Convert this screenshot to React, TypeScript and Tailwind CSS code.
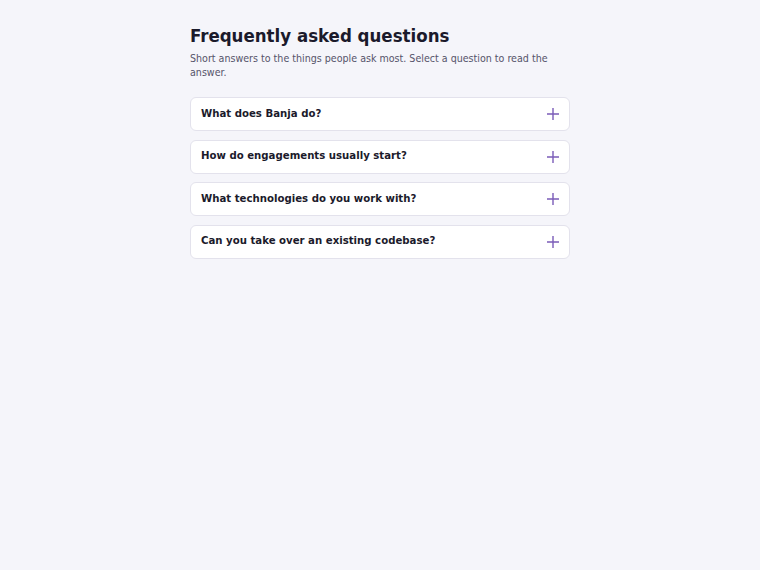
import { useState } from 'react';

const faqs = [
  { q: 'What does Banja do?', a: 'Banja designs and builds web and mobile products for growing teams.' },
  { q: 'How do engagements usually start?', a: 'With a short discovery call, followed by a scoped proposal.' },
  { q: 'What technologies do you work with?', a: 'Mostly TypeScript, React, Node and the major cloud platforms.' },
  { q: 'Can you take over an existing codebase?', a: 'Yes. We start with an audit and then plan the handover.' },
];

export default function App() {
  const [open, setOpen] = useState<number | null>(null);

  return (
    <div className="min-h-screen bg-[#f5f5fa] font-['DejaVu_Sans_Condensed','DejaVu_Sans',sans-serif] text-[#1b1a2b]">
      <div className="mx-auto w-[380px] pt-[24px]">
        <h1 className="text-[18.5px] font-bold leading-[24px]">Frequently asked questions</h1>
        <p className="mt-[3px] text-[10.6px] leading-[14px] text-[#55546a]">
          Short answers to the things people ask most. Select a question to read the answer.
        </p>

        <div className="mt-[18px] flex flex-col gap-[8.5px]">
          {faqs.map((f, i) => (
            <div key={f.q} className="rounded-[6px] border border-[#e3e2ec] bg-white">
              <button
                className="flex h-[32px] w-full items-center justify-between px-[10px] text-left"
                onClick={() => setOpen(open === i ? null : i)}
              >
                <span className="text-[11.3px] font-bold">{f.q}</span>
                <svg width="12" height="12" viewBox="0 0 12 12" className="text-[#7b5cb8]">
                  <path d="M6 0v12M0 6h12" stroke="currentColor" strokeWidth="1.4" />
                </svg>
              </button>
              {open === i && (
                <p className="px-[10px] pb-[10px] text-[10.6px] leading-[15px] text-[#55546a]">{f.a}</p>
              )}
            </div>
          ))}
        </div>
      </div>
    </div>
  );
}
